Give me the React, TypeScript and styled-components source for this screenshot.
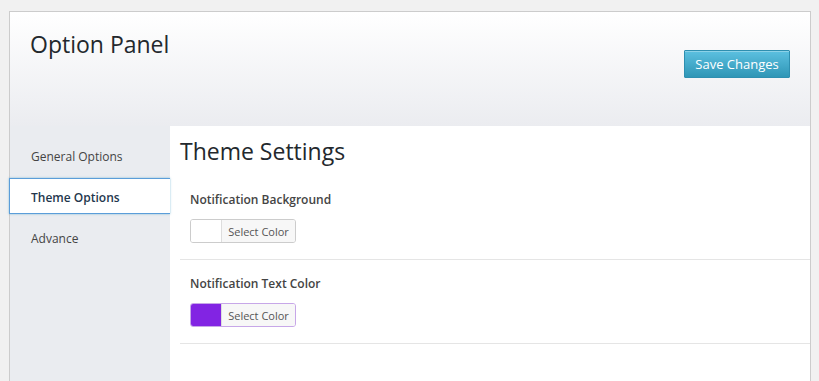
import React from "react";
import styled, { createGlobalStyle } from "styled-components";

const GlobalStyle = createGlobalStyle`
  html, body {
    margin: 0;
    padding: 0;
    overflow: hidden;
    background: #f1f1f1;
    font-family: "Open Sans", "Liberation Sans", sans-serif;
  }
`;

const Panel = styled.div`
  box-sizing: border-box;
  width: 802px;
  height: 370px;
  margin: 11px 0 0 9px;
  border: 1px solid #cccccc;
  border-bottom: none;
  background: #ffffff;
  display: flex;
  flex-direction: column;
`;

const Header = styled.div`
  height: 114px;
  flex-shrink: 0;
  display: flex;
  justify-content: space-between;
  align-items: flex-start;
  padding: 0 20px 0 20px;
  background: linear-gradient(to bottom, #ffffff 0%, #ebecf0 100%);
`;

const Title = styled.h1`
  margin: 15px 0 0 0;
  font-size: 23px;
  font-weight: 400;
  line-height: 34px;
  color: #23282d;
`;

const SaveButton = styled.button`
  margin-top: 38px;
  height: 28px;
  width: 106px;
  padding: 0;
  border: 1px solid #2e8fb0;
  border-radius: 1px;
  background: linear-gradient(to bottom, #5cc0e0 0%, #2f96b6 100%);
  box-shadow: inset 0 1px 0 rgba(255, 255, 255, 0.3);
  color: #ffffff;
  font-family: "Open Sans", "Liberation Sans", sans-serif;
  font-size: 13px;
`;

const Body = styled.div`
  flex: 1;
  display: flex;
`;

const Sidebar = styled.div`
  width: 160px;
  flex-shrink: 0;
  background: #eaecf0;
  padding-top: 11px;
  display: flex;
  flex-direction: column;
  gap: 5px;
`;

const NavItem = styled.div<{ $active?: boolean }>`
  box-sizing: border-box;
  height: 36px;
  display: flex;
  align-items: center;
  padding-top: 2px;
  font-size: 12px;
  color: ${(p) => (p.$active ? "#23374d" : "#444444")};
  font-weight: ${(p) => (p.$active ? 600 : 400)};
  background: ${(p) => (p.$active ? "#ffffff" : "transparent")};
  border: 1px solid ${(p) => (p.$active ? "#5b9dd9" : "transparent")};
  border-right: none;
  margin-left: ${(p) => (p.$active ? "-1px" : "0")};
  padding-left: ${(p) => (p.$active ? "21px" : "20px")};
  box-shadow: ${(p) => (p.$active ? "0 0 2px rgba(30, 140, 190, 0.5)" : "none")};
`;

const Content = styled.div`
  flex: 1;
  padding: 8px 0 0 10px;
`;

const Heading = styled.h2`
  margin: 0 0 8px 0;
  font-size: 23px;
  font-weight: 400;
  line-height: 34px;
  color: #23282d;
`;

const Section = styled.div`
  padding: 14px 10px 16px;
  border-bottom: 1px solid #e5e5e5;
`;

const Label = styled.div`
  font-size: 12px;
  font-weight: 600;
  line-height: 19px;
  color: #444444;
  margin-bottom: 10px;
`;

const Picker = styled.div<{ $focus?: boolean }>`
  box-sizing: border-box;
  display: flex;
  height: 24px;
  width: 106px;
  border: 1px solid ${(p) => (p.$focus ? "#c7a7e8" : "#cccccc")};
  border-radius: 3px;
  overflow: hidden;
`;

const Swatch = styled.span<{ $color: string }>`
  width: 30px;
  background: ${(p) => p.$color};
  border-right: 1px solid #dddddd;
`;

const PickerButton = styled.span`
  flex: 1;
  display: flex;
  align-items: center;
  justify-content: center;
  background: #f7f7f7;
  font-size: 11px;
  color: #555555;
`;

function ColorField({ label, color, focus }: { label: string; color: string; focus?: boolean }) {
  return (
    <Section>
      <Label>{label}</Label>
      <Picker $focus={focus}>
        <Swatch $color={color} />
        <PickerButton>Select Color</PickerButton>
      </Picker>
    </Section>
  );
}

export default function App() {
  return (
    <>
      <GlobalStyle />
      <Panel>
        <Header>
          <Title>Option Panel</Title>
          <SaveButton>Save Changes</SaveButton>
        </Header>
        <Body>
          <Sidebar>
            <NavItem>General Options</NavItem>
            <NavItem $active>Theme Options</NavItem>
            <NavItem>Advance</NavItem>
          </Sidebar>
          <Content>
            <Heading>Theme Settings</Heading>
            <ColorField label="Notification Background" color="#ffffff" />
            <ColorField label="Notification Text Color" color="#8224e3" focus />
          </Content>
        </Body>
      </Panel>
    </>
  );
}
